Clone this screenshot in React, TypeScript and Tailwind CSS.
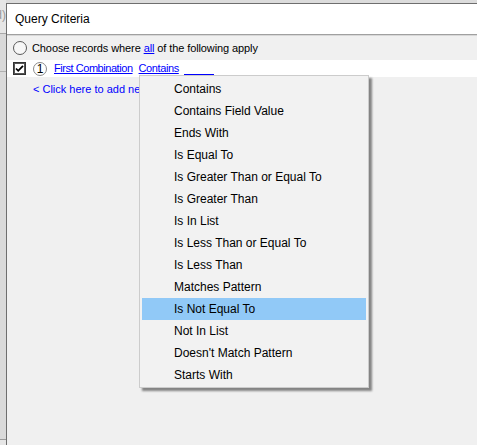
import React from "react";

const items = [
  "Contains",
  "Contains Field Value",
  "Ends With",
  "Is Equal To",
  "Is Greater Than or Equal To",
  "Is Greater Than",
  "Is In List",
  "Is Less Than or Equal To",
  "Is Less Than",
  "Matches Pattern",
  "Is Not Equal To",
  "Not In List",
  "Doesn't Match Pattern",
  "Starts With",
];

export default function App() {
  return (
    <div
      className="relative w-[477px] h-[445px] flex overflow-hidden bg-[#dcdcdc] text-[12px] leading-none text-black"
      style={{ fontFamily: '"Liberation Sans", Arial, sans-serif' }}
    >
      {/* left background strip */}
      <div className="w-[6px] shrink-0 flex flex-col bg-[#d9d9d9] overflow-hidden">
        <div className="h-[34px] shrink-0 bg-[#e6e6e6] border-b border-[#a8a8a8] overflow-hidden relative">
          <span className="absolute right-0 top-[9px] text-[#9a9a9a] whitespace-nowrap">d)</span>
        </div>
        <div className="h-[38px] shrink-0 border-b border-[#b0b0b0]" />
        <div className="flex-1 bg-[#dadada]" />
        <div className="h-[6px] shrink-0 border-t border-[#9a9a9a] bg-[#e6e6e6]" />
      </div>

      {/* window */}
      <div className="flex-1 flex flex-col mt-[3px] border-l border-t border-[#6e6e6e] bg-[#f0f0f0]">
        <div className="h-[30px] shrink-0 bg-white flex items-center pl-[8px]">
          <span className="text-[12px]">Query Criteria</span>
        </div>
        <div className="h-[1px] shrink-0 bg-[#a0a0a0]" />
        <div className="h-[1px] shrink-0 bg-[#d8d8d8]" />

        <div className="flex-1 flex flex-col bg-[#f0f0f0] text-[11px]">
          {/* row 1 */}
          <div className="h-[24px] flex items-center pl-[6px]">
            <span className="w-[14px] h-[14px] rounded-full border border-[#5a5a5a] bg-[#f7f7f7] shrink-0" />
            <span className="ml-[5px] whitespace-nowrap tracking-[-0.1px]">
              Choose records where{" "}
              <span className="text-[#0000ff] underline">all</span> of the following apply
            </span>
          </div>

          {/* row 2 */}
          <div className="h-[17px] flex items-center pl-[6px] bg-white">
            <svg width="13" height="13" viewBox="0 0 13 13" className="shrink-0">
              <rect x="0.5" y="0.5" width="12" height="12" fill="#fff" stroke="#333" />
              <rect x="1.5" y="1.5" width="10" height="10" fill="none" stroke="#555" />
              <path d="M3 6.5 L5.2 8.8 L10 3.8" fill="none" stroke="#000" strokeWidth="1.8" />
            </svg>
            <span className="ml-[7px] w-[14px] h-[14px] rounded-full border border-[#8a8a8a] flex items-center justify-center text-[12px] shrink-0">
              1
            </span>
            <span className="ml-[7px] text-[#0000ff] underline whitespace-nowrap tracking-[-0.45px]">
              First Combination
            </span>
            <span className="ml-[6px] text-[#0000ff] underline whitespace-nowrap tracking-[-0.4px]">Contains</span>
            <span className="ml-[5px] w-[30px] h-[12px] border-b border-[#0000ff] shrink-0" />
          </div>

          {/* row 3 */}
          <div className="h-[24px] flex items-center pl-[26px]">
            <span className="text-[#0000ff] whitespace-nowrap">&lt; Click here to add new</span>
          </div>
        </div>
      </div>

      {/* dropdown menu */}
      <div className="absolute left-[139px] top-[75px] w-[230px] border border-[#cccccc] bg-[#f2f2f2] pt-[2px] pb-[1px] shadow-[3px_3px_2px_rgba(0,0,0,0.45)]">
        {items.map((t) => (
          <div
            key={t}
            className={
              "h-[22px] mx-[2px] flex items-center pl-[32px] whitespace-nowrap " +
              (t === "Is Not Equal To" ? "bg-[#91c9f7]" : "")
            }
          >
            {t}
          </div>
        ))}
      </div>
    </div>
  );
}
